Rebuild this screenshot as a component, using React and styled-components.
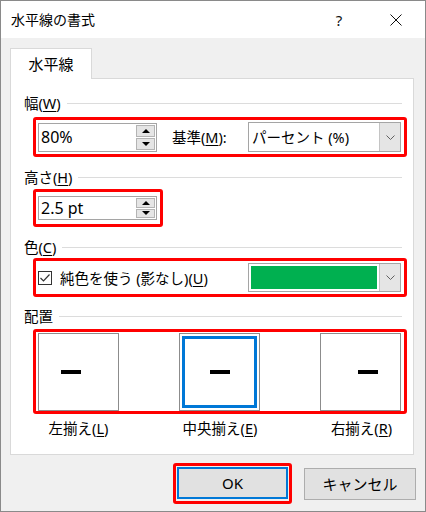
import React from 'react';
import styled, { createGlobalStyle, css } from 'styled-components';

const GlobalStyle = createGlobalStyle`
	html, body {
		margin: 0;
		padding: 0;
		background: #ffffff;
	}
	body {
		font-family: 'Noto Sans', 'Noto Sans CJK JP', sans-serif;
		font-size: 14.5px;
		color: #000;
	}
	* {
		box-sizing: border-box;
	}
`;

const Window = styled.div`
	width: 426px;
	height: 512px;
	border: 1px solid #8a8a8a;
	background: #f0f0f0;
	display: flex;
	flex-direction: column;
`;

const TitleBar = styled.div`
	height: 37px;
	background: #fff;
	display: flex;
	align-items: center;
	padding-left: 10px;
	padding-right: 6px;
`;

const TitleText = styled.div`
	flex: 1;
	font-size: 14px;
	line-height: 20px;
`;

const TitleButtons = styled.div`
	display: flex;
	gap: 11px;
	height: 100%;
`;

const TitleButton = styled.div`
	width: 46px;
	height: 100%;
	display: flex;
	align-items: center;
	justify-content: center;
	font-size: 15px;
	color: #111;
`;

const Body = styled.div`
	flex: 1;
	padding: 10px 0 0 9px;
	display: flex;
	flex-direction: column;
`;

const Tab = styled.div`
	width: 82px;
	height: 31px;
	margin-bottom: -1px;
	position: relative;
	z-index: 1;
	background: #fff;
	border: 1px solid #d9d9d9;
	border-bottom: none;
	display: flex;
	align-items: center;
	justify-content: center;
	font-size: 15px;
	line-height: 20px;
`;

const Panel = styled.div`
	width: 404px;
	height: 377px;
	background: #fff;
	border: 1px solid #d9d9d9;
	padding: 14px 6px 0 13px;
	display: flex;
	flex-direction: column;
`;

const SectionHeader = styled.div`
	display: flex;
	align-items: center;
	gap: 6px;
	height: 20px;
	margin-right: 5px;
	margin-top: ${(p) => p.$top || 0}px;
	margin-bottom: ${(p) => p.$bottom ?? 3}px;
	line-height: 20px;
	white-space: nowrap;
`;

const Rule = styled.div`
	flex: 1;
	height: 1px;
	background: #dcdcdc;
`;

const Key = styled.span`
	text-decoration: underline;
	text-underline-offset: 2px;
`;

const RedBox = styled.div`
	margin-left: 9px;
	width: ${(p) => p.$w}px;
	height: ${(p) => p.$h}px;
	border: 3px solid #ff0000;
	border-radius: 3px;
	display: flex;
	align-items: center;
	justify-content: ${(p) => p.$justify || 'flex-start'};
	padding: 0 3px 0 2px;
`;

const SpinBox = styled.div`
	width: 119px;
	height: ${(p) => p.$h}px;
	border: 1px solid #a5a5a5;
	background: #fff;
	display: flex;
	align-items: stretch;
`;

const SpinValue = styled.div`
	flex: 1;
	display: flex;
	align-items: center;
	padding-left: 2px;
	font-size: 16px;
	line-height: 18px;
`;

const SpinButtons = styled.div`
	width: 20px;
	display: flex;
	flex-direction: column;
	gap: 1px;
	padding: 1px 1px 1px 0;
`;

const SpinButton = styled.div`
	flex: 1;
	background: #e5e5e5;
	border: 1px solid #b4b4b4;
	display: flex;
	align-items: center;
	justify-content: center;
`;

const Triangle = styled.div`
	width: 0;
	height: 0;
	border-left: 4px solid transparent;
	border-right: 4px solid transparent;
	${(p) =>
		p.$down
			? css`border-top: 4px solid #000;`
			: css`border-bottom: 4px solid #000;`}
`;

const InlineLabel = styled.div`
	margin-left: 15px;
	line-height: 20px;
	white-space: nowrap;
`;

const Combo = styled.div`
	margin-left: auto;
	width: 153px;
	height: ${(p) => p.$h}px;
	border: 1px solid #a5a5a5;
	background: #fff;
	display: flex;
	align-items: stretch;
`;

const ComboValue = styled.div`
	flex: 1;
	display: flex;
	align-items: center;
	padding-left: 3px;
	line-height: 20px;
	white-space: nowrap;
`;

const Swatch = styled.div`
	flex: 1;
	margin: 2px;
	background: ${(p) => p.$color};
`;

const ComboButton = styled.div`
	width: 21px;
	background: #e5e5e5;
	border-left: 1px solid #c4c4c4;
	display: flex;
	align-items: center;
	justify-content: center;
`;

const CheckRow = styled.label`
	display: flex;
	align-items: center;
	gap: 8px;
	line-height: 20px;
	white-space: nowrap;
`;

const CheckSquare = styled.div`
	width: 14px;
	height: 14px;
	border: 1px solid #333;
	background: #fff;
	display: flex;
	align-items: center;
	justify-content: center;
`;

const AlignBox = styled.div`
	width: 81px;
	height: 78px;
	border: 1px solid #8c8c8c;
	background: #fff;
	display: flex;
	align-items: center;
	justify-content: ${(p) => p.$align};
	padding: 0 22px;
	${(p) =>
		p.$selected &&
		css`
			box-shadow: inset 0 0 0 2px #fff, inset 0 0 0 5px #0078d7;
		`}
`;

const Dash = styled.div`
	width: 20px;
	height: 4px;
	background: #000;
`;

const AlignLabels = styled.div`
	margin-left: 9px;
	width: 374px;
	padding: 0 5px;
	margin-top: 4px;
	display: flex;
	justify-content: space-between;
`;

const AlignLabel = styled.div`
	width: 81px;
	text-align: center;
	line-height: 20px;
	white-space: nowrap;
`;

const ButtonRow = styled.div`
	display: flex;
	justify-content: flex-end;
	align-items: center;
	gap: 12px;
	margin-top: 8px;
	padding-right: 9px;
`;

const Highlight = styled.div`
	width: 119px;
	height: 41px;
	border: 3px solid #ff0000;
	border-radius: 3px;
	padding: 1px;
	display: flex;
`;

const Button = styled.div`
	width: 112px;
	height: 32px;
	background: #e1e1e1;
	border: ${(p) => (p.$primary ? '2px solid #0078d7' : '1px solid #adadad')};
	display: flex;
	align-items: center;
	justify-content: center;
	font-size: 15px;
	line-height: 20px;
`;

const Chevron = () => (
	<svg width='9' height='5' viewBox='0 0 9 5'>
		<polyline points='0.5,0.5 4.5,4.5 8.5,0.5' fill='none' stroke='#606060' strokeWidth='1' />
	</svg>
);

const Spin = ({ value, h }) => (
	<SpinBox $h={h}>
		<SpinValue>{value}</SpinValue>
		<SpinButtons>
			<SpinButton>
				<Triangle />
			</SpinButton>
			<SpinButton>
				<Triangle $down />
			</SpinButton>
		</SpinButtons>
	</SpinBox>
);

const App = () => {
	return (
		<>
			<GlobalStyle />
			<Window>
				<TitleBar>
					<TitleText>水平線の書式</TitleText>
					<TitleButtons>
						<TitleButton>?</TitleButton>
						<TitleButton>
							<svg width='12' height='12' viewBox='0 0 12 12'>
								<path d='M0.5 0.5 L11.5 11.5 M11.5 0.5 L0.5 11.5' stroke='#111' strokeWidth='1' />
							</svg>
						</TitleButton>
					</TitleButtons>
				</TitleBar>

				<Body>
					<Tab>水平線</Tab>
					<Panel>
						<SectionHeader $bottom={4}>
							<span>
								幅(<Key>W</Key>)
							</span>
							<Rule />
						</SectionHeader>
						<RedBox $w={374} $h={40}>
							<Spin value='80%' h={29} />
							<InlineLabel>
								基準(<Key>M</Key>):
							</InlineLabel>
							<Combo $h={30}>
								<ComboValue>パーセント (%)</ComboValue>
								<ComboButton>
									<Chevron />
								</ComboButton>
							</Combo>
						</RedBox>

						<SectionHeader $top={10} $bottom={2}>
							<span>
								高さ(<Key>H</Key>)
							</span>
							<Rule />
						</SectionHeader>
						<RedBox $w={130} $h={38}>
							<Spin value='2.5 pt' h={24} />
						</RedBox>

						<SectionHeader $top={10} $bottom={1}>
							<span>
								色(<Key>C</Key>)
							</span>
							<Rule />
						</SectionHeader>
						<RedBox $w={374} $h={39}>
							<CheckRow>
								<CheckSquare>
									<svg width='12' height='12' viewBox='0 0 12 12'>
										<polyline points='1.5,6 4.5,9 10.5,2.5' fill='none' stroke='#333' strokeWidth='1.2' />
									</svg>
								</CheckSquare>
								<span>
									純色を使う (影なし)(<Key>U</Key>)
								</span>
							</CheckRow>
							<Combo $h={29}>
								<Swatch $color='#00b050' />
								<ComboButton>
									<Chevron />
								</ComboButton>
							</Combo>
						</RedBox>

						<SectionHeader $top={9} $bottom={3}>
							<span>配置</span>
							<Rule />
						</SectionHeader>
						<RedBox $w={374} $h={85} $justify='space-between'>
							<AlignBox $align='flex-start'>
								<Dash />
							</AlignBox>
							<AlignBox $align='center' $selected>
								<Dash />
							</AlignBox>
							<AlignBox $align='flex-end'>
								<Dash />
							</AlignBox>
						</RedBox>
						<AlignLabels>
							<AlignLabel>
								左揃え(<Key>L</Key>)
							</AlignLabel>
							<AlignLabel>
								中央揃え(<Key>E</Key>)
							</AlignLabel>
							<AlignLabel>
								右揃え(<Key>R</Key>)
							</AlignLabel>
						</AlignLabels>
					</Panel>

					<ButtonRow>
						<Highlight>
							<Button $primary>OK</Button>
						</Highlight>
						<Button>キャンセル</Button>
					</ButtonRow>
				</Body>
			</Window>
		</>
	);
};

export default App;
